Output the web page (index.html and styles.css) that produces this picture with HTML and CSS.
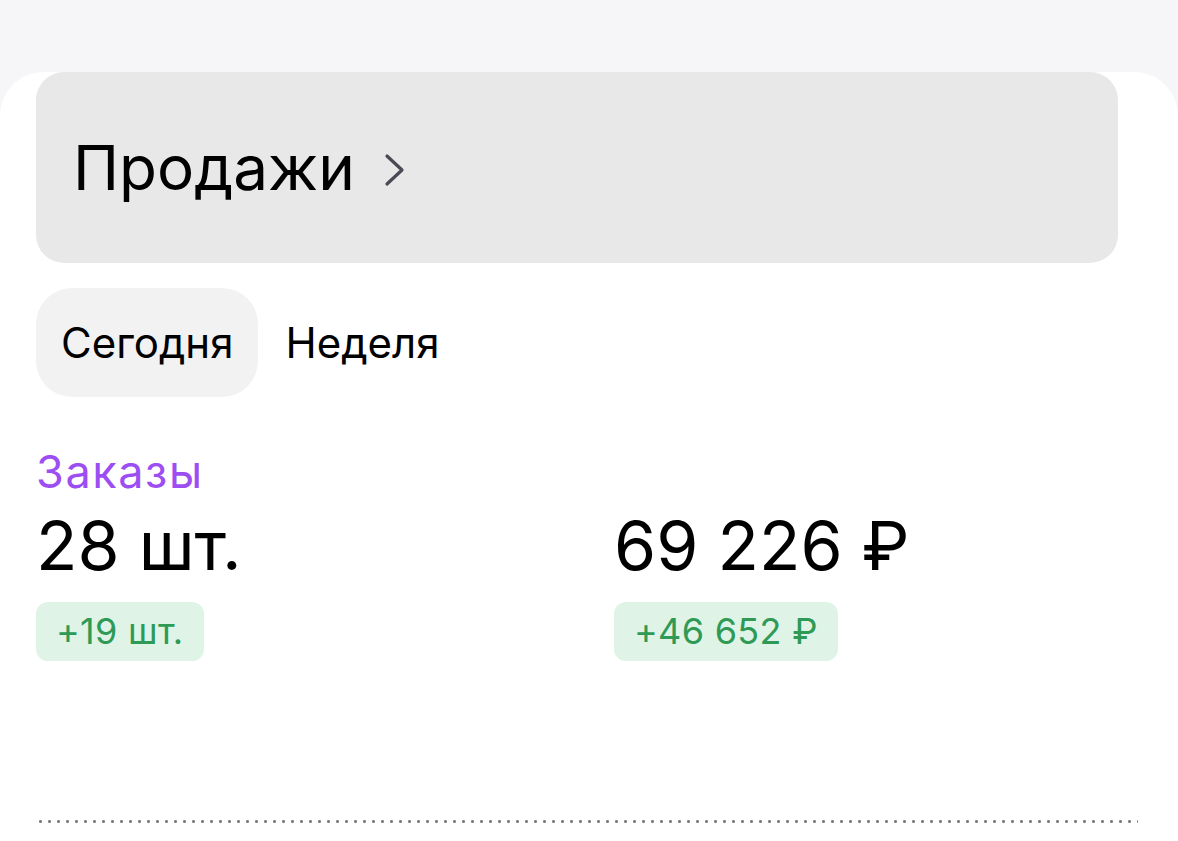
FILE: index.html
```html
<!DOCTYPE html>
<html lang="ru">
<head>
    <meta charset="UTF-8">
    <meta name="viewport" content="width=device-width, initial-scale=1.0">
    <title>Продажи</title>
    <link rel="stylesheet" href="styles.css">
</head>
<body>
    <div class="page">
        <div class="card">
            <a class="sales-header" href="#">
                <span class="sales-title">Продажи</span>
                <svg class="chevron" width="24" height="36" viewBox="0 0 24 36" fill="none">
                    <path d="M4 4 L19 18 L4 32" stroke="#4a4a55" stroke-width="3.2" stroke-linecap="round" stroke-linejoin="round"/>
                </svg>
            </a>
            <div class="tabs">
                <button class="tab active">Сегодня</button>
                <button class="tab">Неделя</button>
            </div>
            <div class="stats">
                <div class="stats-label">Заказы</div>
                <div class="stats-grid">
                    <div class="stat">
                        <div class="stat-value">28 шт.</div>
                        <span class="stat-diff">+19 шт.</span>
                    </div>
                    <div class="stat">
                        <div class="stat-value">69 226 ₽</div>
                        <span class="stat-diff">+46 652 ₽</span>
                    </div>
                </div>
            </div>
            <div class="divider"></div>
        </div>
    </div>
</body>
</html>
```

FILE: styles.css
```css
body {
    margin: 0;
    font-family: Inter, "Noto Sans", sans-serif;
    background-color: #f6f6f8;
    color: #000;
}
.page {
    padding-top: 72px;
}
.card {
    background: #fff;
    border-radius: 44px 44px 0 0;
    padding: 0 40px 0 36px;
    height: 769px;
}
.sales-header {
    display: flex;
    align-items: center;
    height: 191px;
    margin-right: 20px;
    padding-left: 37px;
    background-color: #e8e8e8;
    border-radius: 28px;
    text-decoration: none;
    color: #000;
}
.sales-title {
    font-size: 62px;
    line-height: 1;
}
.chevron {
    margin-left: 28px;
    margin-top: 4px;
}
.tabs {
    display: flex;
    gap: 2px;
    margin-top: 25px;
}
.tab {
    height: 109px;
    padding: 0 25px;
    border: none;
    border-radius: 36px;
    background: transparent;
    font-family: inherit;
    font-size: 42px;
    color: #000;
    cursor: pointer;
}
.tab.active {
    background-color: #f2f2f3;
}
.stats {
    margin-top: 48px;
}
.stats-label {
    color: #9d4ef2;
    font-size: 45px;
    line-height: 54px;
    letter-spacing: 1.6px;
}
.stats-grid {
    display: grid;
    grid-template-columns: 578px 1fr;
    margin-top: 10px;
}
.stat-value {
    font-size: 68px;
    line-height: 72px;
}
.stat-diff {
    display: inline-block;
    margin-top: 21px;
    padding: 0 20px;
    height: 59px;
    line-height: 59px;
    border-radius: 12px;
    background-color: #dff3e6;
    color: #2e9a55;
    font-size: 36px;
    letter-spacing: 0.3px;
}
.divider {
    margin-top: 159px;
    height: 3px;
    background-image: radial-gradient(circle, #7c7c7c 1.3px, transparent 1.6px);
    background-size: 9px 3px;
    background-repeat: repeat-x;
}
```
